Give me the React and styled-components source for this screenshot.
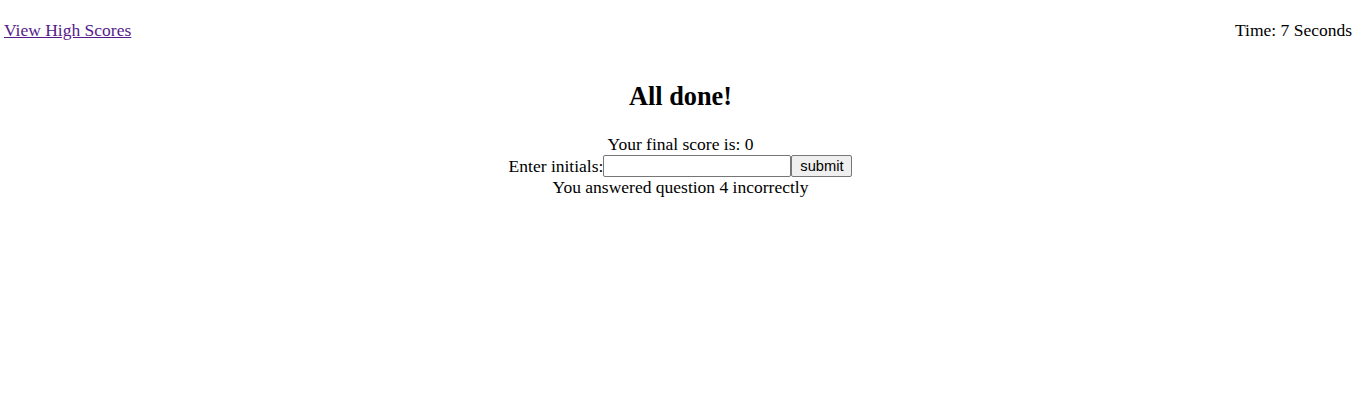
import React from 'react';
import styled, { createGlobalStyle } from 'styled-components';

const GlobalStyle = createGlobalStyle`
  body {
    margin: 0;
    background: #fff;
    color: #000;
    font-family: "Liberation Serif", "Times New Roman", serif;
    font-size: 17.5px;
  }
`;

const Header = styled.header`
  display: flex;
  justify-content: space-between;
  align-items: center;
  padding: 20px 9px 0 4px;
  line-height: 20px;
`;

const ScoresLink = styled.a`
  color: #551a8b;
  text-decoration: underline;
`;

const Timer = styled.span``;

const Main = styled.main`
  text-align: center;
`;

const Title = styled.h2`
  font-size: 26.3px;
  font-weight: bold;
  line-height: 30px;
  margin: 42px 0 22px;
`;

const Line = styled.div`
  line-height: ${p => p.$h}px;
  height: ${p => p.$h}px;
`;

const Initials = styled.input`
  width: 188px;
  height: 22px;
  box-sizing: border-box;
  border: 1px solid #767676;
  border-radius: 2px;
  padding: 1px 2px;
  margin: 0;
  vertical-align: top;
  font-family: "Liberation Sans", Arial, sans-serif;
  font-size: 14.67px;
`;

const Submit = styled.button`
  width: 61px;
  height: 22px;
  box-sizing: border-box;
  padding: 0 6px;
  margin: 0;
  border: 1px solid #767676;
  border-radius: 2px;
  background: #efefef;
  color: #000;
  vertical-align: top;
  font-family: "Liberation Sans", Arial, sans-serif;
  font-size: 14.67px;
  line-height: 20px;
`;

export default function App() {
  return (
    <>
      <GlobalStyle />
      <Header>
        <ScoresLink href="#">View High Scores</ScoresLink>
        <Timer>Time: 7 Seconds</Timer>
      </Header>
      <Main>
        <Title>All done!</Title>
        <Line $h={21}>Your final score is: 0</Line>
        <Line $h={22}>
          Enter initials:<Initials type="text" />
          <Submit>submit</Submit>
        </Line>
        <Line $h={20}>You answered question 4 incorrectly</Line>
      </Main>
    </>
  );
}
